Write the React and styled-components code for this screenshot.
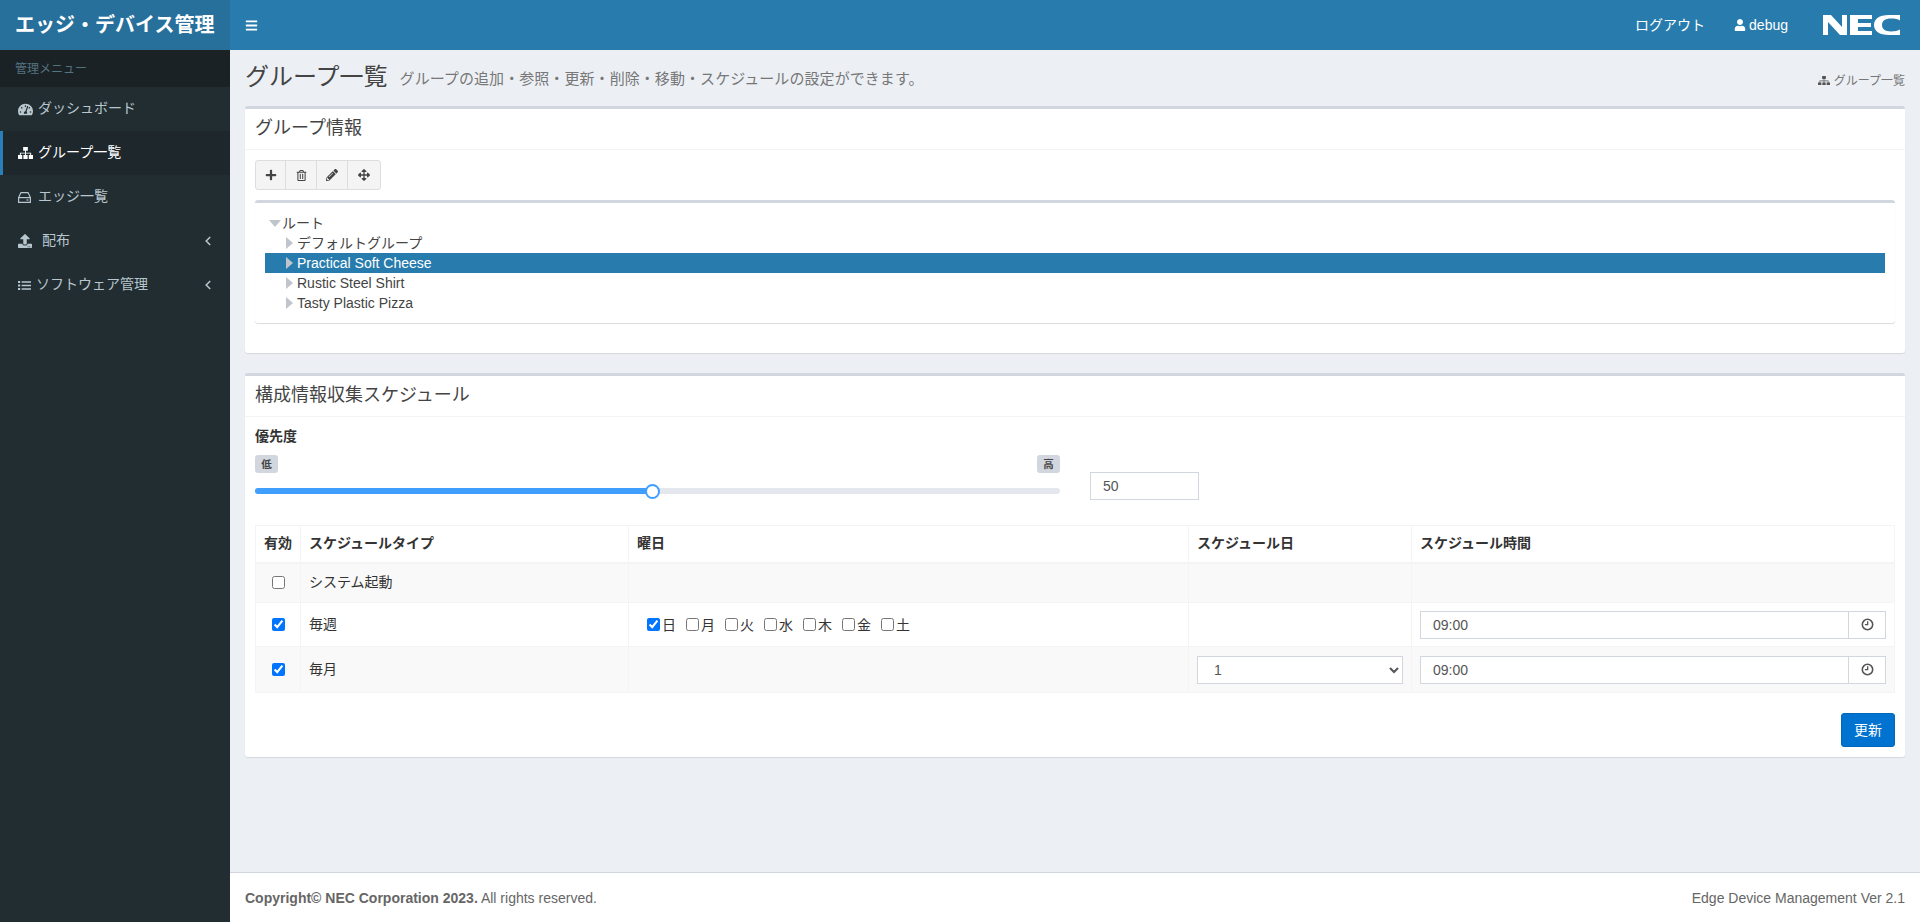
import React from 'react';
import styled, {createGlobalStyle} from 'styled-components';
import {FaTachometerAlt, FaUpload, FaBars, FaUser, FaPlus, FaPencilAlt, FaArrowsAlt, FaRegTrashAlt} from 'react-icons/fa';

const GlobalStyle = createGlobalStyle`
    html, body {
        margin: 0;
        height: 100%;
    }
    body {
        font-family: "Liberation Sans", "Noto Sans CJK JP", sans-serif;
        font-size: 14px;
        line-height: 20px;
        color: #333;
        background: #ecf0f5;
    }
    * {
        box-sizing: border-box;
    }
`;

const Shell = styled.div`
    display: flex;
    height: 100vh;
    overflow: hidden;
`;

// Left column
const Aside = styled.aside`
    width: 230px;
    flex: none;
    display: flex;
    flex-direction: column;
    background: #222d32;
`;

const Logo = styled.div`
    height: 50px;
    flex: none;
    padding-left: 15px;
    display: flex;
    align-items: center;
    background: #26709b;
    color: #fff;
    font-size: 20px;
    font-weight: bold;
`;

const MenuHeader = styled.div`
    height: 37px;
    padding-left: 15px;
    display: flex;
    align-items: center;
    background: #1a2226;
    color: #557280;
    font-size: 12px;
`;

const MenuItem = styled.a`
    height: 44px;
    display: flex;
    align-items: center;
    padding: 0 19px 0 ${p => p.$active ? 15 : 18}px;
    border-left: ${p => p.$active ? '3px solid #2a7fb8' : 'none'};
    background: ${p => p.$active ? '#1e282c' : 'transparent'};
    color: ${p => p.$active ? '#fff' : '#b8c7ce'};

    svg {
        flex: none;
    }

    .label {
        flex: 1;
        margin-left: ${p => p.$gap}px;
        margin-bottom: 2px;
    }
`;

// Right column
const Main = styled.div`
    flex: 1;
    min-width: 0;
    display: flex;
    flex-direction: column;
`;

const Navbar = styled.header`
    height: 50px;
    flex: none;
    display: flex;
    align-items: center;
    padding: 0 20px 0 15px;
    background: #287cad;
    color: #fff;
`;

const NavSpacer = styled.div`
    flex: 1;
`;

const NavLink = styled.a`
    display: flex;
    align-items: center;
    gap: 3px;
    margin-right: ${p => p.$space}px;

    svg {
        font-size: 12px;
    }
`;

const Content = styled.main`
    flex: 1;
    padding: 0 15px;
    background: #ecf0f5;
`;

const PageHead = styled.div`
    height: 56px;
    display: flex;
    align-items: center;
    padding-bottom: 3px;

    h1 {
        margin: 0;
        font-size: 24px;
        font-weight: normal;
        line-height: 30px;
        color: #444;
    }

    small {
        margin-left: 12px;
        padding-top: 4px;
        font-size: 15px;
        letter-spacing: .07px;
        color: #777;
    }
`;

const Crumb = styled.div`
    margin-left: auto;
    padding-top: 8px;
    display: flex;
    align-items: center;
    gap: 4px;
    font-size: 12px;
    color: #777;
    svg {
        color: #555;
    }
`;

const Box = styled.section`
    margin-bottom: 20px;
    border-top: 3px solid #d2d6de;
    border-radius: 3px;
    background: #fff;
    box-shadow: 0 1px 1px rgba(0, 0, 0, .1);
`;

const BoxHeader = styled.h3`
    margin: 0;
    height: ${p => p.$h}px;
    padding: 0 0 2px 10px;
    display: flex;
    align-items: center;
    border-bottom: 1px solid #f4f4f4;
    font-size: 18px;
    font-weight: normal;
    color: #444;
`;

const BoxBody = styled.div`
    padding: 10px 10px ${p => p.$bottom}px;
`;

const Toolbar = styled.div`
    display: inline-flex;
    height: 30px;
    vertical-align: top;
`;

const ToolButton = styled.button`
    width: ${p => p.$w}px;
    margin-left: -1px;
    padding: 0;
    display: flex;
    align-items: center;
    justify-content: center;
    background: #f4f4f4;
    border: 1px solid #ddd;
    color: #444;
    font-size: 12px;

    &:first-child {
        margin-left: 0;
        border-radius: 3px 0 0 3px;
    }
    &:last-child {
        border-radius: 0 3px 3px 0;
    }
`;

const TreeBox = styled.div`
    margin-top: 10px;
    margin-bottom: 14px;
    padding: 10px;
    border-top: 3px solid #d2d6de;
    border-radius: 3px;
    box-shadow: 0 1px 1px rgba(0, 0, 0, .15);
`;

const TreeRow = styled.div`
    height: 20px;
    display: flex;
    align-items: center;
    padding-left: ${p => p.$indent}px;
    background: ${p => p.$selected ? '#287cad' : 'transparent'};
    color: ${p => p.$selected ? '#fff' : '#444'};
`;

const Caret = styled.i`
    width: 0;
    height: 0;
    flex: none;
    margin-right: ${p => p.$open ? 1 : 4}px;
    border-style: solid;
    border-color: transparent;
    ${p => p.$open
        ? 'border-width: 7px 6px 0; border-top-color: #c0c4cc;'
        : 'border-width: 6.5px 0 6.5px 7px; border-left-color: #c0c4cc;'}
`;

const FieldLabel = styled.div`
    font-weight: bold;
    margin-top: -1px;
    margin-bottom: 9px;
`;

const PriorityRow = styled.div`
    display: flex;
    height: 70px;
    gap: 30px;
`;

const SliderColumn = styled.div`
    width: 805px;
`;

const ScaleRow = styled.div`
    display: flex;
    justify-content: space-between;
`;

const Tag = styled.span`
    width: 23px;
    height: 18px;
    display: flex;
    align-items: center;
    justify-content: center;
    border-radius: 3px;
    background: #d2d6de;
    color: #444;
    font-size: 10.5px;
    font-weight: bold;
`;

const Track = styled.div`
    position: relative;
    height: 6px;
    margin-top: 15px;
    border-radius: 3px;
    background: #e4e7ed;
`;

const TrackFill = styled.div`
    height: 100%;
    border-radius: 3px;
    background: #409eff;
`;

const Thumb = styled.div`
    position: absolute;
    top: -4.5px;
    width: 15px;
    height: 15px;
    margin-left: -7.5px;
    border: 2px solid #409eff;
    border-radius: 50%;
    background: #fff;
`;

const TextField = styled.input`
    width: ${p => p.$w ? `${p.$w}px` : 'auto'};
    flex: ${p => p.$w ? 'none' : 1};
    min-width: 0;
    height: 28px;
    margin-top: ${p => p.$top || 0}px;
    padding: 0 12px;
    border: 1px solid #d2d6de;
    background: #fff;
    color: #555;
    font: inherit;
    outline: none;
`;

const Table = styled.table`
    width: calc(100% - 1px);
    table-layout: fixed;
    border-collapse: collapse;

    th, td {
        padding: 0 8px;
        border: 1px solid #f4f4f4;
        text-align: left;
    }
    th {
        height: 37px;
        padding-bottom: 1px;
        border-bottom-width: 2px;
    }
`;

const Row = styled.tr`
    height: ${p => p.$h}px;
    background: ${p => p.$striped ? '#f9f9f9' : '#fff'};
`;

const TypeCell = styled.td`
    && {
        padding-bottom: 2px;
    }
`;

const CheckCell = styled.td`
    && {
        text-align: center;
        padding: 0 0 3px;
    }
    input {
        margin: 0;
        vertical-align: middle;
    }
`;

const Days = styled.div`
    display: flex;
    gap: 10px;
    padding-left: 10px;
`;

const Day = styled.label`
    display: flex;
    align-items: center;
    gap: 2px;

    input {
        margin: 0;
    }
`;

const TimeGroup = styled.div`
    display: flex;
`;

const TimeAddon = styled.span`
    width: 38px;
    height: 28px;
    flex: none;
    margin-left: -1px;
    display: flex;
    align-items: center;
    justify-content: center;
    border: 1px solid #d2d6de;
    background: #fff;
    color: #555;
`;

const DaySelect = styled.select`
    width: 100%;
    height: 28px;
    display: block;
    padding: 0 0 0 12px;
    border: 1px solid #d2d6de;
    border-radius: 0;
    background: #fff;
    color: #555;
    font: inherit;
    outline: none;
`;

const Actions = styled.div`
    display: flex;
    justify-content: flex-end;
    margin-top: 20px;
`;

const PrimaryButton = styled.button`
    width: 54px;
    height: 34px;
    padding: 0;
    border: 1px solid #0067bb;
    border-radius: 3px;
    background: #0073d1;
    color: #fff;
    font: inherit;
`;

const Footer = styled.footer`
    height: 50px;
    flex: none;
    display: flex;
    align-items: center;
    justify-content: space-between;
    padding: 0 15px;
    border-top: 1px solid #d2d6de;
    background: #fff;
    color: #666;
`;

const ClockIcon = () => (
    <svg width="13" height="13" viewBox="0 0 14 14" fill="none" stroke="currentColor">
        <circle cx="7" cy="7" r="5.6" strokeWidth="1.7"/>
        <path d="M7.2 3.4V7.2H4.2" strokeWidth="1.4"/>
    </svg>
);

const SitemapIcon = ({width = 15}) => (
    <svg width={width} height={width * 13 / 16} viewBox="0 0 16 13" fill="currentColor">
        <path d="M5.5 0h5v4H8.5v2H14v2.5h2V13h-4.5V8.5H13V7H8.5v1.5h1.75V13h-4.5V8.5H7.5V7H3v1.5h1.5V13H0V8.5h2V6h5.5V4h-2z"/>
    </svg>
);

const HddIcon = () => (
    <svg width="13" height="11" viewBox="0 0 13 11" fill="none" stroke="currentColor" strokeWidth="1.2">
        <path d="M3 .6H10L12.4 5.6V10.4H.6V5.6Z"/>
        <path d="M.6 5.6H12.4"/>
        <path d="M8.5 8H10.5"/>
    </svg>
);

const ListIcon = () => (
    <svg width="13" height="11" viewBox="0 0 13 11" fill="currentColor">
        <path d="M0 1h2.2v2H0zM0 4.5h2.2v2H0zM0 8h2.2v2H0zM3.6 1.3H13v1.4H3.6zM3.6 4.8H13v1.4H3.6zM3.6 8.3H13v1.4H3.6z"/>
    </svg>
);

const AngleIcon = () => (
    <svg width="6" height="10" viewBox="0 0 6 10" fill="none" stroke="currentColor" strokeWidth="1.5">
        <path d="M5.2 1L1.2 5L5.2 9"/>
    </svg>
);

const NecLogo = () => (
    <svg width="77" height="20" viewBox="0 0 77 20" fill="#fff">
        <path d="M0 0H8L19 12V0H24V20H17L5 7V20H0Z"/>
        <path d="M27 0H49V4H35V8H48V12H35V16H49V20H27Z"/>
        <path d="M77 0V5.5C75 4.2 72 3.6 68 3.6C62 3.6 59 6 59 10C59 14 62 16.4 68 16.4C72 16.4 75 15.8 77 14.5V20H66C56 20 51 16 51 10C51 4 56 0 66 0Z"/>
    </svg>
);

const menu = [
    {label: 'ダッシュボード', icon: <FaTachometerAlt size={15}/>, gap: 5},
    {label: 'グループ一覧', icon: <SitemapIcon/>, gap: 5, active: true},
    {label: 'エッジ一覧', icon: <HddIcon/>, gap: 7},
    {label: '配布', icon: <FaUpload size={14}/>, gap: 10, more: true},
    {label: 'ソフトウェア管理', icon: <ListIcon/>, gap: 5, more: true},
];

const tree = ['デフォルトグループ', 'Practical Soft Cheese', 'Rustic Steel Shirt', 'Tasty Plastic Pizza'];
const days = ['日', '月', '火', '水', '木', '金', '土'];
const priority = 49.4;

const TimeInput = () => (
    <TimeGroup>
        <TextField readOnly value="09:00"/>
        <TimeAddon><ClockIcon/></TimeAddon>
    </TimeGroup>
);

const App = () => (
    <Shell>
        <GlobalStyle/>
        <Aside>
            <Logo>エッジ・デバイス管理</Logo>
            <MenuHeader>管理メニュー</MenuHeader>
            {menu.map(({label, icon, gap, active, more}) => (
                <MenuItem key={label} $active={active} $gap={gap}>
                    {icon}
                    <span className="label">{label}</span>
                    {more && <AngleIcon/>}
                </MenuItem>
            ))}
        </Aside>
        <Main>
            <Navbar>
                <FaBars size={13}/>
                <NavSpacer/>
                <NavLink $space={29}>ログアウト</NavLink>
                <NavLink $space={35}><FaUser/>debug</NavLink>
                <NecLogo/>
            </Navbar>
            <Content>
                <PageHead>
                    <h1>グループ一覧</h1>
                    <small>グループの追加・参照・更新・削除・移動・スケジュールの設定ができます。</small>
                    <Crumb><SitemapIcon width={12}/>グループ一覧</Crumb>
                </PageHead>

                <Box>
                    <BoxHeader $h={41}>グループ情報</BoxHeader>
                    <BoxBody $bottom={16}>
                        <Toolbar>
                            <ToolButton $w={31}><FaPlus/></ToolButton>
                            <ToolButton $w={32}><FaRegTrashAlt size={11}/></ToolButton>
                            <ToolButton $w={32}><FaPencilAlt/></ToolButton>
                            <ToolButton $w={34}><FaArrowsAlt/></ToolButton>
                        </Toolbar>
                        <TreeBox>
                            <TreeRow $indent={4}><Caret $open/>ルート</TreeRow>
                            {tree.map((name, i) => (
                                <TreeRow key={name} $indent={21} $selected={i === 1}>
                                    <Caret/>{name}
                                </TreeRow>
                            ))}
                        </TreeBox>
                    </BoxBody>
                </Box>

                <Box>
                    <BoxHeader $h={41}>構成情報収集スケジュール</BoxHeader>
                    <BoxBody $bottom={10}>
                        <FieldLabel>優先度</FieldLabel>
                        <PriorityRow>
                            <SliderColumn>
                                <ScaleRow><Tag>低</Tag><Tag>高</Tag></ScaleRow>
                                <Track>
                                    <TrackFill style={{width: `${priority}%`}}/>
                                    <Thumb style={{left: `${priority}%`}}/>
                                </Track>
                            </SliderColumn>
                            <TextField $w={109} $top={17} readOnly value="50"/>
                        </PriorityRow>
                        <Table>
                            <colgroup>
                                <col width="45"/>
                                <col width="328"/>
                                <col width="560"/>
                                <col width="223"/>
                                <col width="483"/>
                            </colgroup>
                            <thead>
                                <tr>
                                    <th>有効</th>
                                    <th>スケジュールタイプ</th>
                                    <th>曜日</th>
                                    <th>スケジュール日</th>
                                    <th>スケジュール時間</th>
                                </tr>
                            </thead>
                            <tbody>
                                <Row $h={40} $striped>
                                    <CheckCell><input type="checkbox"/></CheckCell>
                                    <TypeCell>システム起動</TypeCell>
                                    <td/>
                                    <td/>
                                    <td/>
                                </Row>
                                <Row $h={44}>
                                    <CheckCell><input type="checkbox" defaultChecked/></CheckCell>
                                    <TypeCell>毎週</TypeCell>
                                    <td>
                                        <Days>
                                            {days.map((day, i) => (
                                                <Day key={day}>
                                                    <input type="checkbox" defaultChecked={i === 0}/>{day}
                                                </Day>
                                            ))}
                                        </Days>
                                    </td>
                                    <td/>
                                    <td><TimeInput/></td>
                                </Row>
                                <Row $h={46} $striped>
                                    <CheckCell><input type="checkbox" defaultChecked/></CheckCell>
                                    <TypeCell>毎月</TypeCell>
                                    <td/>
                                    <td>
                                        <DaySelect defaultValue="1">
                                            <option value="1">1</option>
                                            <option value="2">2</option>
                                        </DaySelect>
                                    </td>
                                    <td><TimeInput/></td>
                                </Row>
                            </tbody>
                        </Table>
                        <Actions><PrimaryButton>更新</PrimaryButton></Actions>
                    </BoxBody>
                </Box>
            </Content>
            <Footer>
                <span><b>Copyright© NEC Corporation 2023.</b> All rights reserved.</span>
                <span>Edge Device Management Ver 2.1</span>
            </Footer>
        </Main>
    </Shell>
);

export default App;
